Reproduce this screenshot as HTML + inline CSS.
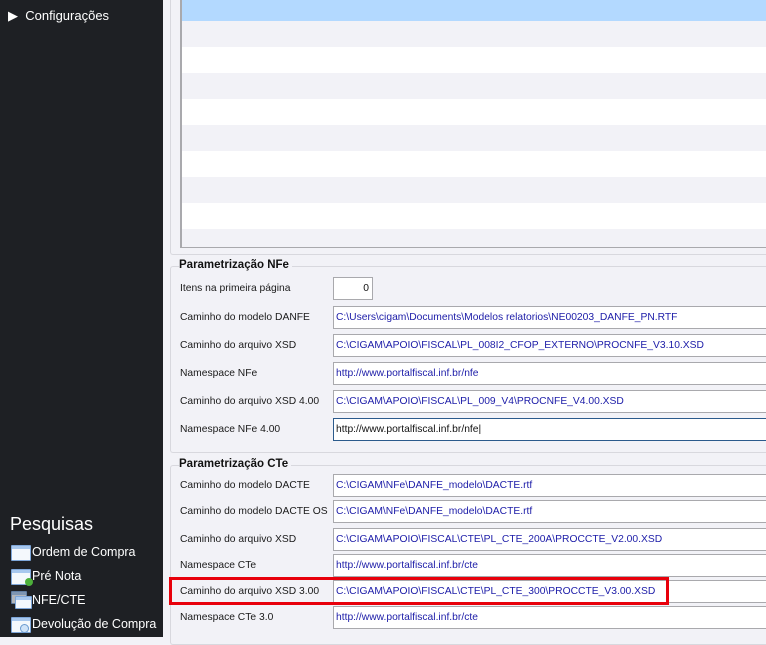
<!DOCTYPE html>
<html><head><meta charset="utf-8"><style>
*{margin:0;padding:0;box-sizing:border-box}
body{width:766px;height:637px;overflow:hidden;background:#f2f2f7;font-family:"Liberation Sans",sans-serif;font-size:11px;color:#1a1a1a;position:relative}
.sb{position:absolute;left:0;top:0;width:163px;height:637px;background:#1e2024;color:#fff}
.a{position:absolute}
.lbl{position:absolute;left:180px;height:23px;line-height:24px;white-space:nowrap;font-size:10.3px}
.inp{position:absolute;left:333px;width:440px;height:23px;background:#fff;border:1px solid #a9a9ad;line-height:22px;padding-left:2px;color:#1c1ca8;white-space:nowrap;font-size:10.3px}
.grp{position:absolute;left:170px;width:610px;border:1px solid #d8d8de;border-radius:3px;border-right:none}
.ttl{position:absolute;left:179px;font-weight:bold;background:#f2f2f7;padding-right:3px;font-size:11.5px;color:#111}
.ico{position:absolute;left:11px;width:20px;height:16px;border:1px solid #7ea6d8;background:linear-gradient(#a8c8ee 0 3px,#f4f8fc 3px);border-radius:1px}
.it{position:absolute;left:32px;font-size:12.5px}
</style></head><body>
<div class="sb">
 <div class="a" style="left:8px;top:8px;font-size:13px">▶&nbsp;&nbsp;Configurações</div>
 <div class="a" style="left:10px;top:514px;font-size:18px">Pesquisas</div>
 <div class="ico" style="top:545px"></div><div class="it" style="top:545px">Ordem de Compra</div>
 <div class="ico" style="top:569px"></div><div class="a" style="left:25px;top:578px;width:8px;height:8px;border-radius:50%;background:#4caf3a"></div><div class="it" style="top:569px">Pré Nota</div>
 <div class="ico" style="top:591px;left:11px;width:16px;height:13px;opacity:.7"></div><div class="ico" style="top:596px;left:15px;width:17px;height:13px"></div><div class="it" style="top:593px">NFE/CTE</div>
 <div class="ico" style="top:617px"></div><div class="a" style="left:20px;top:624px;width:9px;height:9px;border-radius:50%;border:1px solid #6a9ad0;background:#cfe3f8"></div><div class="it" style="top:617px">Devolução de Compra</div>
</div>
<div class="a" style="left:163px;top:0;width:7px;height:637px;background:#f2f2f7"></div>
<div class="grp" style="top:-5px;height:260px"></div>
<div class="a" style="left:180px;top:0;width:600px;height:248px;border:1px solid #a9a9ad;border-top:none;border-left:2px solid #a9a9ad;background:#fff;overflow:hidden">
 <div style="height:21px;background:#b3d9ff"></div>
 <div style="height:26px;background:#f2f2f7"></div><div style="height:26px"></div>
 <div style="height:26px;background:#f2f2f7"></div><div style="height:26px"></div>
 <div style="height:26px;background:#f2f2f7"></div><div style="height:26px"></div>
 <div style="height:26px;background:#f2f2f7"></div><div style="height:26px"></div>
 <div style="height:26px;background:#f2f2f7"></div>
</div>
<div class="grp" style="top:266px;height:187px"></div>
<div class="ttl" style="top:259px">Parametrização NFe</div>
<div class="lbl" style="top:277px">Itens na primeira página</div>
<div class="inp" style="top:277px;width:40px;text-align:right;padding-right:3px;color:#111">0</div>
<div class="lbl" style="top:306px">Caminho do modelo DANFE</div>
<div class="inp" style="top:306px">C:\Users\cigam\Documents\Modelos relatorios\NE00203_DANFE_PN.RTF</div>
<div class="lbl" style="top:334px">Caminho do arquivo XSD</div>
<div class="inp" style="top:334px">C:\CIGAM\APOIO\FISCAL\PL_008I2_CFOP_EXTERNO\PROCNFE_V3.10.XSD</div>
<div class="lbl" style="top:362px">Namespace NFe</div>
<div class="inp" style="top:362px">http://www.portalfiscal.inf.br/nfe</div>
<div class="lbl" style="top:390px">Caminho do arquivo XSD 4.00</div>
<div class="inp" style="top:390px">C:\CIGAM\APOIO\FISCAL\PL_009_V4\PROCNFE_V4.00.XSD</div>
<div class="lbl" style="top:418px">Namespace NFe 4.00</div>
<div class="inp" style="top:418px;border-color:#2b5a8c;color:#111">http://www.portalfiscal.inf.br/nfe|</div>
<div class="grp" style="top:465px;height:180px"></div>
<div class="ttl" style="top:458px">Parametrização CTe</div>
<div class="lbl" style="top:474px">Caminho do modelo DACTE</div>
<div class="inp" style="top:474px">C:\CIGAM\NFe\DANFE_modelo\DACTE.rtf</div>
<div class="lbl" style="top:500px">Caminho do modelo DACTE OS</div>
<div class="inp" style="top:500px">C:\CIGAM\NFe\DANFE_modelo\DACTE.rtf</div>
<div class="lbl" style="top:528px">Caminho do arquivo XSD</div>
<div class="inp" style="top:528px">C:\CIGAM\APOIO\FISCAL\CTE\PL_CTE_200A\PROCCTE_V2.00.XSD</div>
<div class="lbl" style="top:554px">Namespace CTe</div>
<div class="inp" style="top:554px">http://www.portalfiscal.inf.br/cte</div>
<div class="lbl" style="top:580px">Caminho do arquivo XSD 3.00</div>
<div class="inp" style="top:580px">C:\CIGAM\APOIO\FISCAL\CTE\PL_CTE_300\PROCCTE_V3.00.XSD</div>
<div class="lbl" style="top:606px">Namespace CTe 3.0</div>
<div class="inp" style="top:606px">http://www.portalfiscal.inf.br/cte</div>
<div class="a" style="left:169px;top:577px;width:500px;height:28px;border:3px solid #e8000b"></div>
</body></html>
